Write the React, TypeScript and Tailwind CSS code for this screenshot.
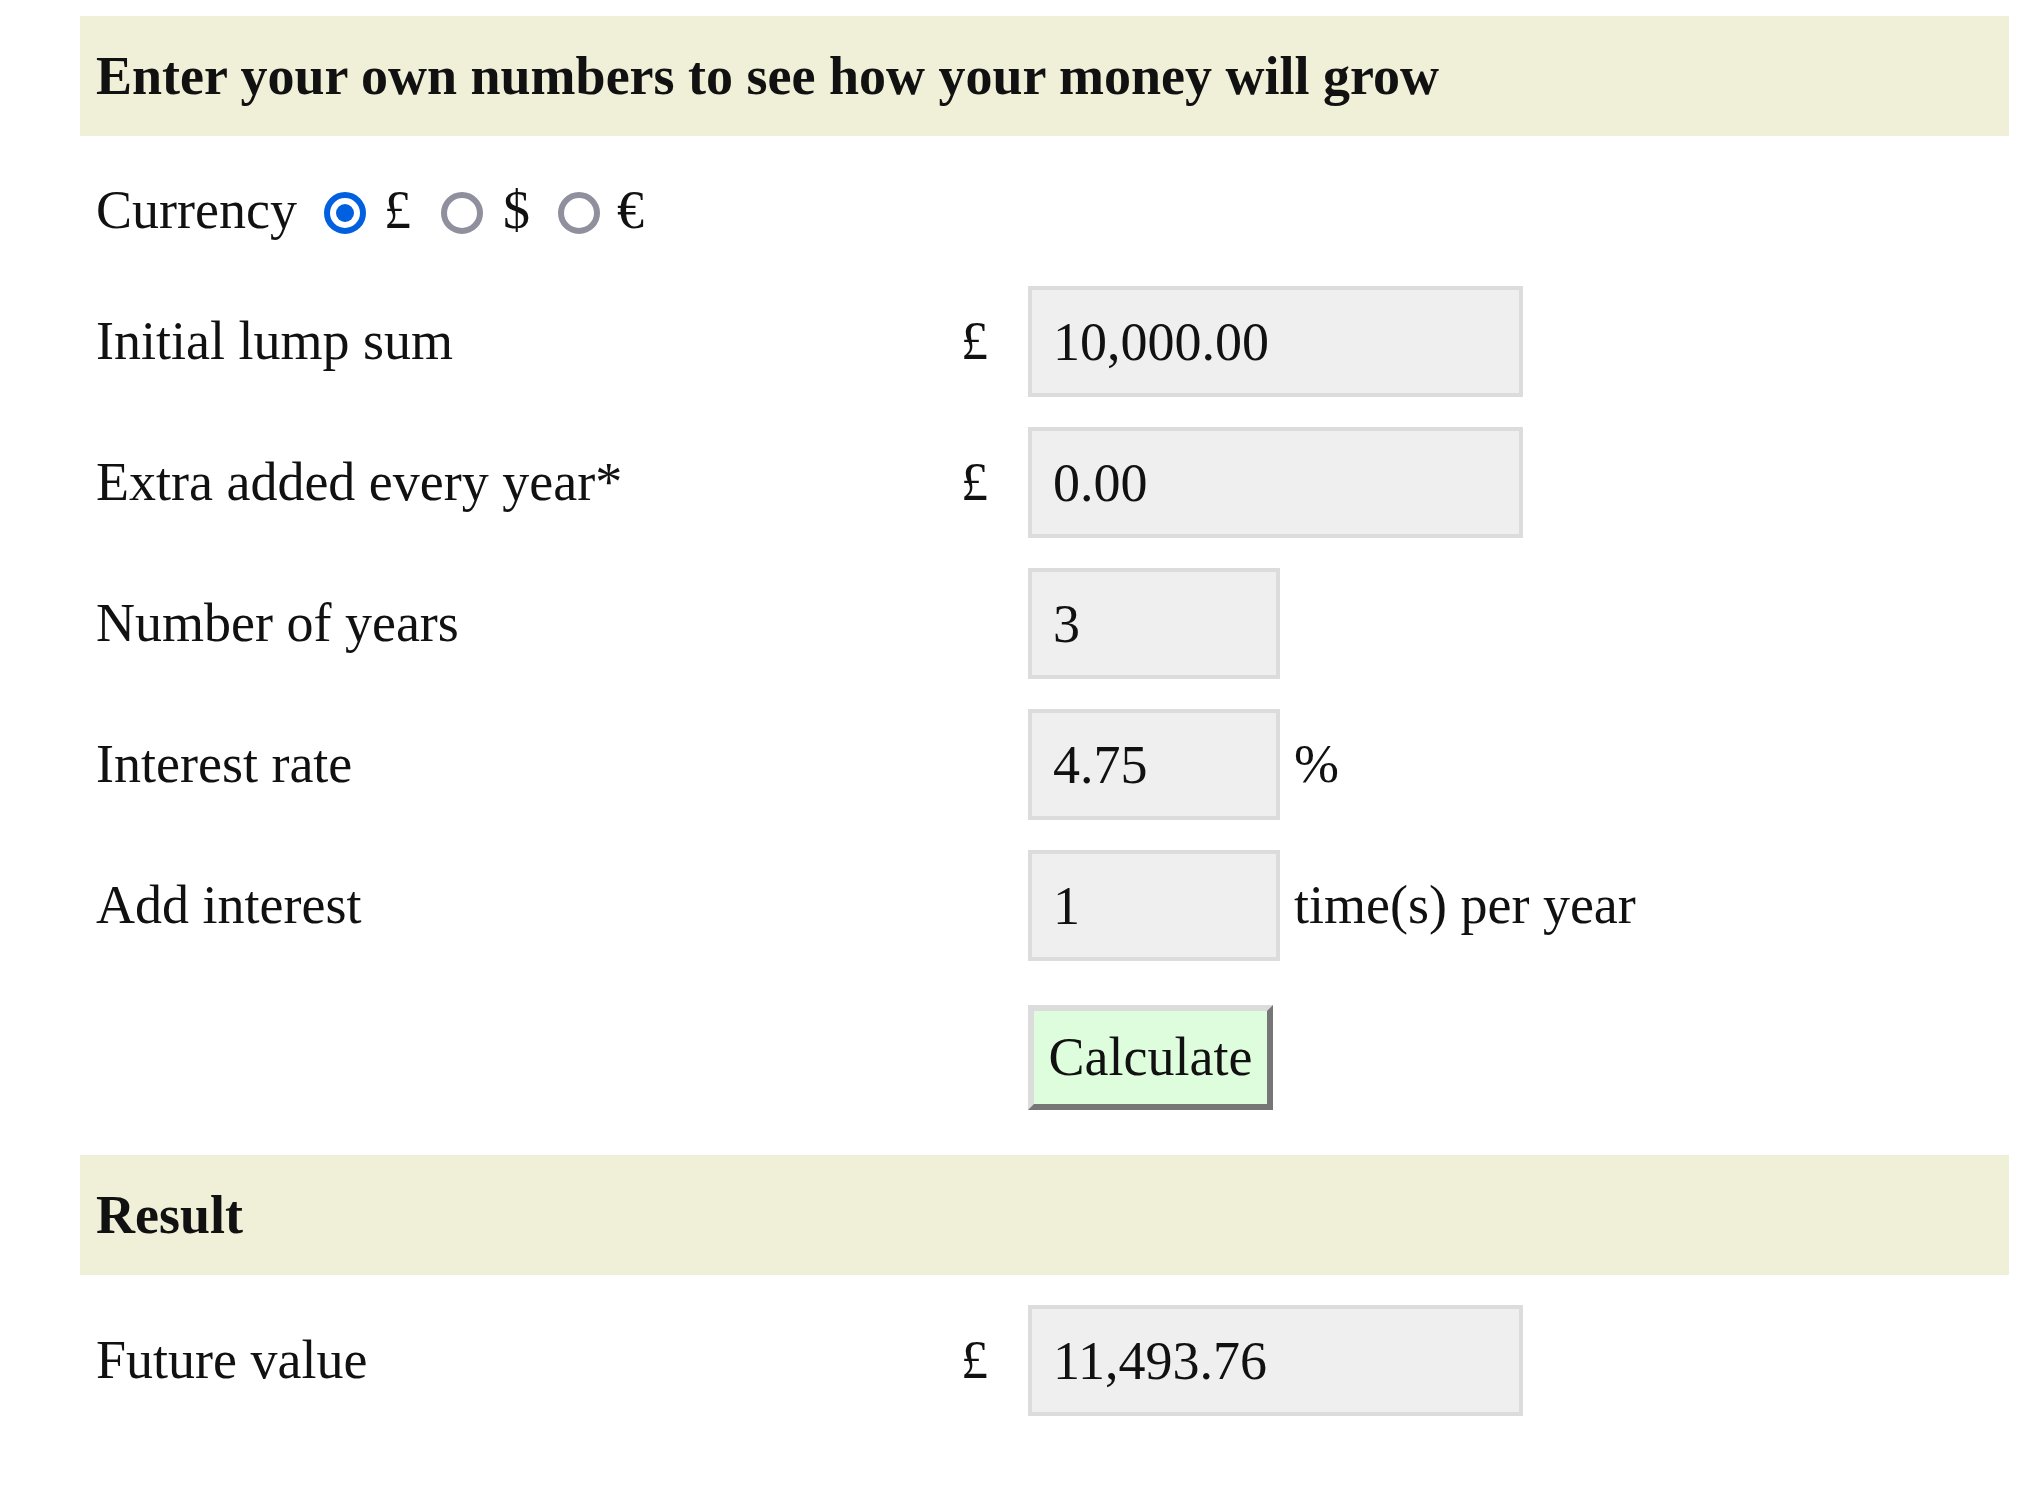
import React from "react";

const serif = { fontFamily: '"Liberation Serif", "Times New Roman", serif' };

function Radio({ checked }: { checked?: boolean }) {
  if (checked) {
    return (
      <div className="mt-[6px] flex h-[42px] w-[42px] shrink-0 items-center justify-center rounded-full border-[6px] border-[#0060df] bg-white">
        <div className="h-[18px] w-[18px] rounded-full bg-[#0060df]" />
      </div>
    );
  }
  return <div className="mt-[6px] h-[42px] w-[42px] shrink-0 rounded-full border-[6px] border-[#8f8f9d] bg-white" />;
}

function Field({
  label,
  symbol,
  value,
  wide,
  suffix,
}: {
  label: string;
  symbol?: string;
  value: string;
  wide?: boolean;
  suffix?: string;
}) {
  return (
    <div className="flex h-[111px] items-center">
      <div className="w-[881px] shrink-0 pl-[16px]">{label}</div>
      <div className="w-[67px] shrink-0">{symbol ?? ""}</div>
      <input
        readOnly
        value={value}
        className={`${wide ? "w-[495px]" : "w-[252px]"} h-[111px] shrink-0 border-[4px] border-[#dcdcdc] bg-[#efefef] pl-[21px] text-[54px] text-[#111] outline-none`}
      />
      {suffix ? <div className="ml-[14px]">{suffix}</div> : null}
    </div>
  );
}

export default function App() {
  return (
    <div className="min-h-[1503px] bg-white text-[54px] text-[#111]" style={serif}>
      <div className="ml-[80px] mr-[31px] pt-[16px]">
        <div className="flex h-[120px] items-center bg-[#f0efd8] pl-[16px] font-bold">
          Enter your own numbers to see how your money will grow
        </div>

        <div className="mt-[44px] flex h-[60px] items-center pl-[16px]">
          <div className="w-[228px]">Currency</div>
          <Radio checked />
          <div className="ml-[18px]">£</div>
          <div className="ml-[30px]">
            <Radio />
          </div>
          <div className="ml-[20px]">$</div>
          <div className="ml-[28px]">
            <Radio />
          </div>
          <div className="ml-[17px]">€</div>
        </div>

        <div className="mt-[46px] flex flex-col gap-[30px]">
          <Field label="Initial lump sum" symbol="£" value="10,000.00" wide />
          <Field label="Extra added every year*" symbol="£" value="0.00" wide />
          <Field label="Number of years" value="3" />
          <Field label="Interest rate" value="4.75" suffix="%" />
          <Field label="Add interest" value="1" suffix="time(s) per year" />
        </div>

        <div className="mt-[44px] flex">
          <div className="w-[948px] shrink-0" />
          <button className="flex h-[105px] w-[245px] items-center justify-center border-[6px] border-b-[#767676] border-l-[#dcdcdc] border-r-[#767676] border-t-[#dcdcdc] bg-[#ddfddd] text-[54px] text-[#111]">
            Calculate
          </button>
        </div>

        <div className="mt-[45px] flex h-[120px] items-center bg-[#f0efd8] pl-[16px] font-bold">Result</div>

        <div className="mt-[30px]">
          <Field label="Future value" symbol="£" value="11,493.76" wide />
        </div>
      </div>
    </div>
  );
}
